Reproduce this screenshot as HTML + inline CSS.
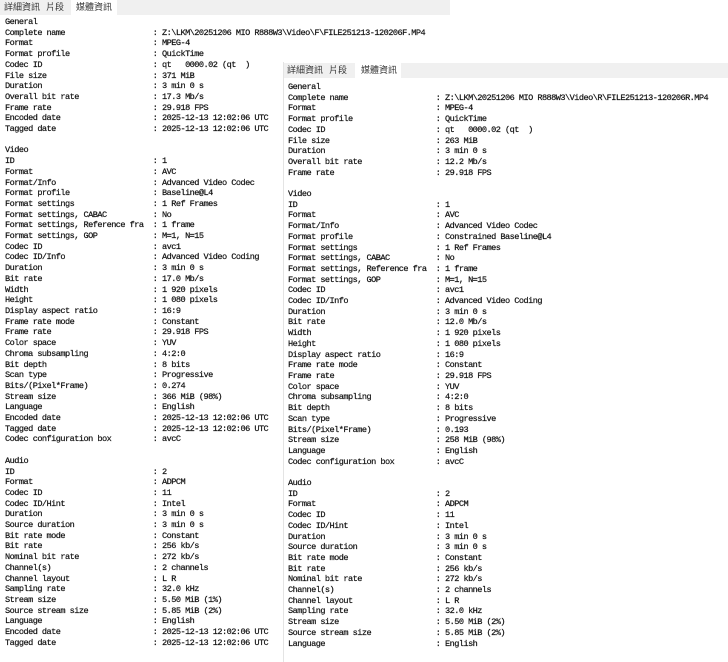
<!DOCTYPE html>
<html><head><meta charset="utf-8"><style>
html,body{margin:0;padding:0;width:728px;height:662px;overflow:hidden;background:#fff;}
.tabs{position:absolute;background:#f0f0f0;height:15px;font:9px "Liberation Sans","Noto Sans CJK TC",sans-serif;color:#333;}
.tabs span{position:absolute;top:0;height:15px;line-height:14px;}
.tabs span.sel{background:#fff;}
pre{position:absolute;margin:0;font-family:"Liberation Mono",monospace;font-size:8.6px;letter-spacing:-0.54px;line-height:10.7px;color:#111;-webkit-text-stroke:0.2px #111;}
#win2{position:absolute;left:283px;top:62px;width:445px;height:600px;background:#fff;border-left:1px solid #e4e4e4;}
</style></head><body>
<div class="tabs" style="left:0;top:0;width:450px;">
<span style="left:4px">詳細資訊</span><span style="left:46px">片段</span><span class="sel" style="left:71px;width:46px;padding-left:5px;box-sizing:border-box">媒體資訊</span>
</div>
<pre style="left:5px;top:17px">General
Complete name                   : Z:\LKM\20251206 MIO R888W3\Video\F\FILE251213-120206F.MP4
Format                          : MPEG-4
Format profile                  : QuickTime
Codec ID                        : qt   0000.02 (qt  )
File size                       : 371 MiB
Duration                        : 3 min 0 s
Overall bit rate                : 17.3 Mb/s
Frame rate                      : 29.918 FPS
Encoded date                    : 2025-12-13 12:02:06 UTC
Tagged date                     : 2025-12-13 12:02:06 UTC

Video
ID                              : 1
Format                          : AVC
Format/Info                     : Advanced Video Codec
Format profile                  : Baseline@L4
Format settings                 : 1 Ref Frames
Format settings, CABAC          : No
Format settings, Reference fra  : 1 frame
Format settings, GOP            : M=1, N=15
Codec ID                        : avc1
Codec ID/Info                   : Advanced Video Coding
Duration                        : 3 min 0 s
Bit rate                        : 17.0 Mb/s
Width                           : 1 920 pixels
Height                          : 1 080 pixels
Display aspect ratio            : 16:9
Frame rate mode                 : Constant
Frame rate                      : 29.918 FPS
Color space                     : YUV
Chroma subsampling              : 4:2:0
Bit depth                       : 8 bits
Scan type                       : Progressive
Bits/(Pixel*Frame)              : 0.274
Stream size                     : 366 MiB (98%)
Language                        : English
Encoded date                    : 2025-12-13 12:02:06 UTC
Tagged date                     : 2025-12-13 12:02:06 UTC
Codec configuration box         : avcC

Audio
ID                              : 2
Format                          : ADPCM
Codec ID                        : 11
Codec ID/Hint                   : Intel
Duration                        : 3 min 0 s
Source duration                 : 3 min 0 s
Bit rate mode                   : Constant
Bit rate                        : 256 kb/s
Nominal bit rate                : 272 kb/s
Channel(s)                      : 2 channels
Channel layout                  : L R
Sampling rate                   : 32.0 kHz
Stream size                     : 5.50 MiB (1%)
Source stream size              : 5.85 MiB (2%)
Language                        : English
Encoded date                    : 2025-12-13 12:02:06 UTC
Tagged date                     : 2025-12-13 12:02:06 UTC</pre>
<div id="win2">
<div class="tabs" style="left:0;top:1px;width:445px;">
<span style="left:3px">詳細資訊</span><span style="left:45px">片段</span><span class="sel" style="left:71px;width:46px;padding-left:6px;box-sizing:border-box">媒體資訊</span>
</div>
<pre style="left:4px;top:20px">General
Complete name                   : Z:\LKM\20251206 MIO R888W3\Video\R\FILE251213-120206R.MP4
Format                          : MPEG-4
Format profile                  : QuickTime
Codec ID                        : qt   0000.02 (qt  )
File size                       : 263 MiB
Duration                        : 3 min 0 s
Overall bit rate                : 12.2 Mb/s
Frame rate                      : 29.918 FPS

Video
ID                              : 1
Format                          : AVC
Format/Info                     : Advanced Video Codec
Format profile                  : Constrained Baseline@L4
Format settings                 : 1 Ref Frames
Format settings, CABAC          : No
Format settings, Reference fra  : 1 frame
Format settings, GOP            : M=1, N=15
Codec ID                        : avc1
Codec ID/Info                   : Advanced Video Coding
Duration                        : 3 min 0 s
Bit rate                        : 12.0 Mb/s
Width                           : 1 920 pixels
Height                          : 1 080 pixels
Display aspect ratio            : 16:9
Frame rate mode                 : Constant
Frame rate                      : 29.918 FPS
Color space                     : YUV
Chroma subsampling              : 4:2:0
Bit depth                       : 8 bits
Scan type                       : Progressive
Bits/(Pixel*Frame)              : 0.193
Stream size                     : 258 MiB (98%)
Language                        : English
Codec configuration box         : avcC

Audio
ID                              : 2
Format                          : ADPCM
Codec ID                        : 11
Codec ID/Hint                   : Intel
Duration                        : 3 min 0 s
Source duration                 : 3 min 0 s
Bit rate mode                   : Constant
Bit rate                        : 256 kb/s
Nominal bit rate                : 272 kb/s
Channel(s)                      : 2 channels
Channel layout                  : L R
Sampling rate                   : 32.0 kHz
Stream size                     : 5.50 MiB (2%)
Source stream size              : 5.85 MiB (2%)
Language                        : English</pre>
</div>
</body></html>
